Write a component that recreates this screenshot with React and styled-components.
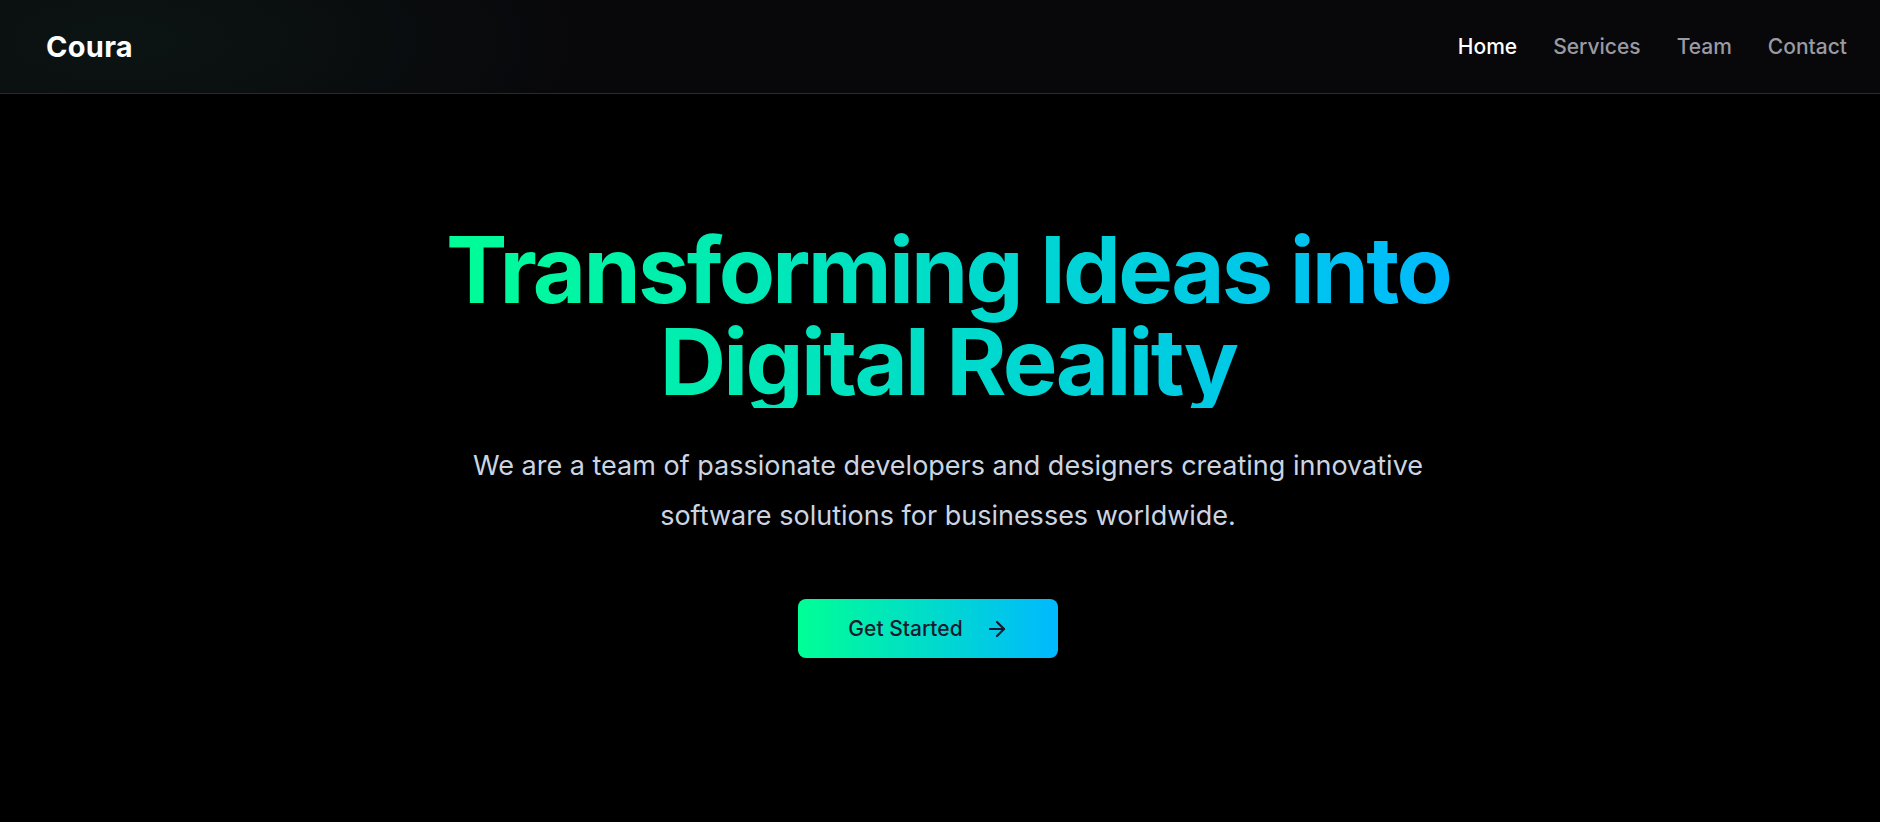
import React from "react"
import styled, { createGlobalStyle } from "styled-components"
import { ArrowRight } from "lucide-react"

const GlobalStyle = createGlobalStyle`
  * {
    box-sizing: border-box;
  }
  body {
    margin: 0;
    background: #000;
    font-family: Inter, "Noto Sans", sans-serif;
    color: #fff;
  }
`

const Page = styled.div`
  min-height: 100vh;
  background: #000;
`

const Header = styled.header`
  height: 94px;
  display: flex;
  align-items: center;
  justify-content: space-between;
  padding: 0 33px 0 46px;
  background: radial-gradient(ellipse 460px 170px at 120px 40px, #0c1413 0%, rgba(8, 8, 11, 0) 100%),
    #08080b;
  border-bottom: 1px solid #2a2a2e;
`

const Logo = styled.a`
  font-size: 29px;
  font-weight: 700;
  color: #fff;
  text-decoration: none;
  letter-spacing: 0.01em;
`

const Nav = styled.nav`
  display: flex;
  align-items: center;
  gap: 36px;
`

const NavLink = styled.a`
  font-size: 21px;
  font-weight: 500;
  text-decoration: none;
  color: ${({ active }) => (active ? "#ffffff" : "#9a9aa3")};
  cursor: pointer;
  transition: color 200ms;

  :hover {
    color: #fff;
  }
`

const Hero = styled.section`
  display: flex;
  flex-direction: column;
  align-items: center;
  text-align: center;
  padding: 130px 24px 0 40px;
`

const Title = styled.h1`
  margin: 0;
  max-width: 1040px;
  font-size: 92px;
  line-height: 1;
  font-weight: 700;
  letter-spacing: -0.03em;
  background: linear-gradient(90deg, #00ff95 0%, #00b9ff 100%);
  -webkit-background-clip: text;
  background-clip: text;
  color: transparent;
`

const Subtitle = styled.p`
  margin: 33px 0 0;
  max-width: 1000px;
  font-size: 27px;
  line-height: 50px;
  font-weight: 400;
  color: #cbd5e1;
`

const Button = styled.button`
  margin: 58px 40px 0 0;
  display: flex;
  align-items: center;
  gap: 22px;
  padding: 16px 49px 16px 50px;
  border: none;
  border-radius: 8px;
  background: linear-gradient(90deg, #00ff95 0%, #00b9ff 100%);
  font-family: Inter, sans-serif;
  font-size: 21px;
  line-height: 27px;
  font-weight: 500;
  color: #1a1a2e;
  cursor: pointer;
`

const App = () => {
  return (
    <Page>
      <GlobalStyle />
      <Header>
        <Logo href="#">Coura</Logo>
        <Nav>
          <NavLink active>Home</NavLink>
          <NavLink>Services</NavLink>
          <NavLink>Team</NavLink>
          <NavLink>Contact</NavLink>
        </Nav>
      </Header>
      <Hero>
        <Title>Transforming Ideas into Digital Reality</Title>
        <Subtitle>
          We are a team of passionate developers and designers creating innovative
          software solutions for businesses worldwide.
        </Subtitle>
        <Button>
          Get Started
          <ArrowRight size={24} strokeWidth={2.2} />
        </Button>
      </Hero>
    </Page>
  )
}

export default App
